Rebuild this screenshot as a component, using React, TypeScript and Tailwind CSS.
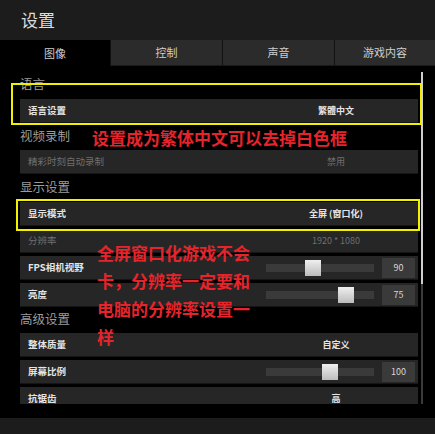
const font = { fontFamily: '"Noto Sans CJK SC", "Noto Sans", sans-serif' };

type Row =
  | { kind: 'header'; label: string; h: string }
  | { kind: 'value'; label: string; value: string; dim?: boolean; mt: string }
  | { kind: 'slider'; label: string; value: string; pos: number; mt: string };

const rows: Row[] = [
  { kind: 'header', label: '语言', h: 'h-[32px] pt-[4px]' },
  { kind: 'value', label: '语言设置', value: '繁體中文', mt: 'mt-[1px]' },
  { kind: 'header', label: '视频录制', h: 'h-[27px]' },
  { kind: 'value', label: '精彩时刻自动录制', value: '禁用', dim: true, mt: 'mt-0' },
  { kind: 'header', label: '显示设置', h: 'h-[27px]' },
  { kind: 'value', label: '显示模式', value: '全屏 (窗口化)', mt: 'mt-[1px]' },
  { kind: 'value', label: '分辨率', value: '1920 * 1080', dim: true, mt: 'mt-[3px]' },
  { kind: 'slider', label: 'FPS相机视野', value: '90', pos: 39, mt: 'mt-[3px]' },
  { kind: 'slider', label: '亮度', value: '75', pos: 72, mt: 'mt-[3px]' },
  { kind: 'header', label: '高级设置', h: 'h-[25px]' },
  { kind: 'value', label: '整体质量', value: '自定义', mt: 'mt-[1px]' },
  { kind: 'slider', label: '屏幕比例', value: '100', pos: 56, mt: 'mt-[3px]' },
  { kind: 'value', label: '抗锯齿', value: '高', mt: 'mt-[3px]' },
];

const tabs = ['图像', '控制', '声音', '游戏内容'];

function SettingRow({ row }: { row: Row }) {
  if (row.kind === 'header') {
    return (
      <div className={`${row.h} flex items-center text-[12.5px] text-[#9c9c9c]`}>{row.label}</div>
    );
  }
  if (row.kind === 'value') {
    return (
      <div className={`${row.mt} h-[24px] flex items-center bg-[#262626] border-b border-[#151515]`}>
        <div className={`flex-1 pl-[8px] text-[9.5px] ${row.dim ? 'text-[#6f6f6f]' : 'text-[#e4e4e4] font-bold'}`}>
          {row.label}
        </div>
        <div className={`w-[164px] text-center text-[9px] ${row.dim ? 'text-[#6f6f6f]' : 'text-[#e4e4e4] font-bold'}`}>
          {row.value}
        </div>
      </div>
    );
  }
  return (
    <div className={`${row.mt} h-[24px] flex items-center bg-[#262626] border-b border-[#151515]`}>
      <div className="flex-1 pl-[8px] text-[9.5px] text-[#e4e4e4] font-bold">{row.label}</div>
      <div className="relative w-[108px] h-[8px] bg-[#3a3a3a]">
        <div
          className="absolute top-[-4px] w-[16px] h-[16px] bg-gradient-to-b from-[#efefef] to-[#bcbcbc]"
          style={{ left: row.pos }}
        />
      </div>
      <div className="ml-[8px] mr-[3px] w-[33px] h-[20px] bg-[#3a3a3a] flex items-center justify-center text-[9px] text-[#d8d8d8]">
        {row.value}
      </div>
    </div>
  );
}

export default function App() {
  return (
    <div className="relative w-[435px] h-[434px] bg-black overflow-hidden" style={font}>
      <div className="h-[40px] bg-[#1c1c1c] flex items-center pl-[21px] text-[17px] text-[#dcdcdc]">
        设置
      </div>
      <div className="h-[26px] grid grid-cols-[110px_112px_112px_1fr] text-[11px] text-[#cfcfcf]">
        {tabs.map((t, i) => (
          <div
            key={t}
            className={`flex items-center justify-center ${
              i === 0 ? 'bg-black' : 'bg-[#2b2b2b] border-l border-[#121212] border-b border-b-[#1a1a1a]'
            }`}
          >
            {t}
          </div>
        ))}
      </div>

      <div className="relative h-[338px] overflow-hidden pl-[20px] pr-[17px]">
        {rows.map((r) => (
          <SettingRow key={r.label} row={r} />
        ))}
        <div className="absolute right-[12px] top-[6px] w-[2px] h-[212px] bg-[#cfcfcf]" />
        <div className="absolute right-[12px] top-[218px] w-[2px] h-[120px] bg-[#3a3a3a]" />
      </div>
      <div className="h-[14px]" />
      <div className="h-[16px] bg-[#1c1c1c]" />

      {/* yellow annotation boxes */}
      <div className="absolute left-[11px] top-[83px] w-[411px] h-[42px] border-2 border-[#f2f000]" />
      <div className="absolute left-[16px] top-[199px] w-[404px] h-[32px] border-2 border-[#f2f000]" />

      {/* red annotation text */}
      <div className="absolute left-[92px] top-[126px] text-[17px] leading-[24px] font-bold text-[#e5242c]">
        设置成为繁体中文可以去掉白色框
      </div>
      <div className="absolute left-[97px] top-[239px] w-[156px] text-[17px] leading-[28px] font-bold text-[#e5242c]">
        全屏窗口化游戏不会卡，分辨率一定要和电脑的分辨率设置一样
      </div>
    </div>
  );
}
